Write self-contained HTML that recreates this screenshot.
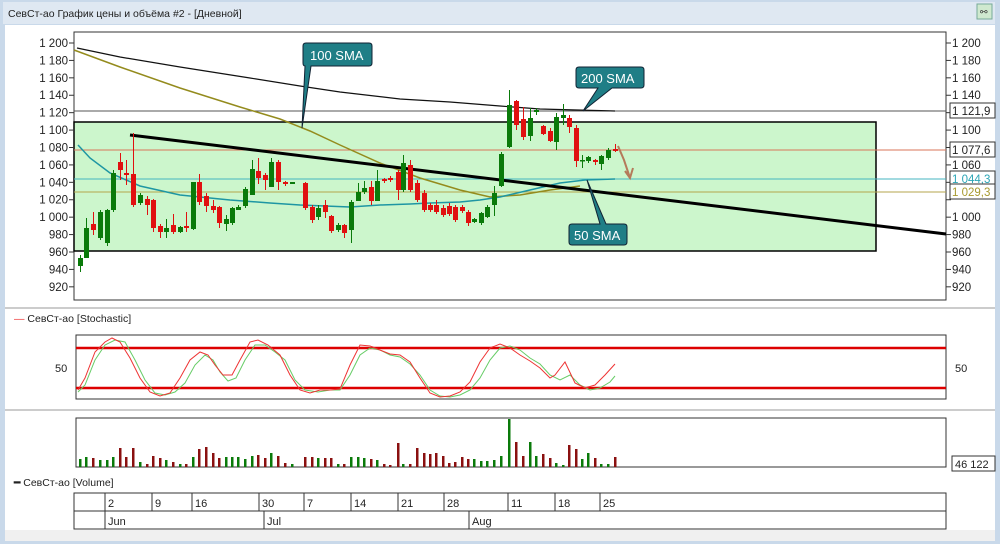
<!DOCTYPE html>
<html><head><meta charset="utf-8"><style>
body{margin:0;width:1000px;height:544px;overflow:hidden;background:#fff;font-family:"Liberation Sans",sans-serif}
svg text{font-family:"Liberation Sans",sans-serif}
</style></head><body>
<svg id="s" width="1000" height="544" viewBox="0 0 1000 544" xmlns="http://www.w3.org/2000/svg">
<rect x="0" y="0" width="1000" height="544" fill="#c9d9ea"/>
<rect x="3" y="2" width="992" height="22" fill="#dfe8f2"/>
<text x="8" y="17" font-size="10.5" fill="#222">СевСт-ао График цены и объёма #2 - [Дневной]</text>
<rect x="977" y="4" width="15" height="15" fill="#cfe9cf" stroke="#7a9" stroke-width="1"/>
<text x="980" y="15" font-size="9" fill="#333">⚯</text>
<rect x="5" y="25" width="990" height="516" fill="#fff"/>
<rect x="5" y="530" width="990" height="11" fill="#f0f0f0"/>
<line x1="5" y1="308" x2="995" y2="308" stroke="#ccc" stroke-width="2"/>
<line x1="5" y1="410" x2="995" y2="410" stroke="#ccc" stroke-width="2"/>
<rect x="74" y="32" width="872" height="268" fill="#fff" stroke="#333" stroke-width="1"/>
<rect x="74" y="122" width="802" height="129" fill="#ccf6cc" stroke="#000" stroke-width="1.5"/>
<line x1="74" y1="111" x2="946" y2="111" stroke="#555" stroke-width="1"/>
<line x1="74" y1="150" x2="946" y2="150" stroke="#d9755a" stroke-width="1"/>
<line x1="74" y1="179" x2="946" y2="179" stroke="#45b6c0" stroke-width="1"/>
<line x1="74" y1="192" x2="946" y2="192" stroke="#b5a64c" stroke-width="1"/>
<polyline fill="none" stroke="#111" stroke-width="1.2" points="77,48 120,57 180,67 250,78 300,86 340,92 400,99 450,102 500,106 540,109 615,111"/>
<polyline fill="none" stroke="#948b1d" stroke-width="1.5" points="74,50 120,67 180,88 240,107 280,119 310,131 340,145 380,163 420,178 460,190 490,197 520,195 550,190 580,186"/>
<polyline fill="none" stroke="#1e96a3" stroke-width="1.5" points="78,145 90,158 110,173 140,186 180,195 230,200 270,203 300,205 350,207 380,205 410,204 430,203 460,202 480,200 500,197 530,190 560,183 585,180 615,179"/>
<line x1="130" y1="135" x2="946" y2="234" stroke="#000" stroke-width="3"/>
<g id="candles"></g>
<polyline fill="none" stroke="#b57a5a" stroke-width="2" points="618,146 624,160 630,178 625,171 630,178 633,168"/>
<path d="M306,43 H369 Q372,43 372,46 V63 Q372,66 369,66 H311 L302,128 L305,66 Q303,66 303,63 V46 Q303,43 306,43Z" fill="#1f7e86" stroke="#123" stroke-width="1"/>
<text x="310" y="60" font-size="13" fill="#fff">100 SMA</text>
<path d="M579,67 H641 Q644,67 644,70 V85 Q644,88 641,88 H612 L583,111 L598,88 H579 Q576,88 576,85 V70 Q576,67 579,67Z" fill="#1f7e86" stroke="#123" stroke-width="1"/>
<text x="581" y="83" font-size="13" fill="#fff">200 SMA</text>
<path d="M572,224 H600 L587,180 L606,224 H624 Q627,224 627,227 V242 Q627,245 624,245 H572 Q569,245 569,242 V227 Q569,224 572,224Z" fill="#1f7e86" stroke="#123" stroke-width="1"/>
<text x="574" y="240" font-size="13" fill="#fff">50 SMA</text>
<g id="axes" font-size="11.5" fill="#222"></g>
<text x="14" y="322" font-size="10.5" fill="#222"><tspan fill="#e33">—</tspan> СевСт-ао [Stochastic]</text>
<rect x="76" y="335" width="870" height="64" fill="#fff" stroke="#333"/>
<rect x="76" y="346" width="870" height="4" fill="#d00" opacity=".25"/>
<line x1="76" y1="348" x2="946" y2="348" stroke="#d00" stroke-width="2"/>
<rect x="76" y="386" width="870" height="4" fill="#d00" opacity=".25"/>
<line x1="76" y1="388" x2="946" y2="388" stroke="#d00" stroke-width="2"/>
<text x="55" y="372" font-size="11" fill="#222">50</text>
<text x="955" y="372" font-size="11" fill="#222">50</text>
<polyline fill="none" stroke="#6c6" stroke-width="1" points="78,392 85,385 95,360 105,345 115,340 125,342 135,360 145,380 155,393 165,395 175,392 185,383 195,365 205,355 213,360 220,372 228,381 236,378 245,360 255,345 265,345 275,352 285,360 295,380 305,390 318,392 330,390 340,390 350,375 360,355 370,348 380,350 390,355 400,357 410,364 420,375 430,390 440,396 450,397 460,395 470,390 480,378 490,360 500,348 510,346 520,350 530,358 540,364 550,375 560,380 570,375 580,385 590,390 600,388 610,382 615,376"/>
<polyline fill="none" stroke="#e33" stroke-width="1" points="78,390 85,378 95,352 105,342 112,338 120,342 130,358 140,378 150,392 160,396 170,393 180,378 190,360 200,352 208,355 215,365 223,375 232,375 240,360 250,342 258,340 268,345 280,355 290,375 300,390 310,393 320,390 330,390 340,389 350,365 360,345 370,346 380,350 390,354 400,355 410,362 420,378 430,393 440,397 450,396 460,392 470,382 480,362 490,348 500,344 510,348 520,355 530,361 540,368 550,378 555,375 565,362 575,383 585,388 595,385 605,375 615,364"/>
<rect x="76" y="418" width="870" height="49" fill="#fff" stroke="#333"/>
<g id="vol"></g>
<rect x="952" y="456" width="43" height="15" fill="#fff" stroke="#333"/>
<text x="955" y="468" font-size="11" fill="#222">46 122</text>
<text x="14" y="486" font-size="10.5" fill="#222"><tspan font-weight="bold">━</tspan> СевСт-ао [Volume]</text>
<rect x="74" y="493" width="872" height="36" fill="#fff" stroke="#333"/>
<line x1="74" y1="511" x2="946" y2="511" stroke="#333"/>
<g id="dates" font-size="11" fill="#222"></g>
</svg>
<script>
var NS="http://www.w3.org/2000/svg";
function el(p,t,a,txt){var e=document.createElementNS(NS,t);for(var k in a)e.setAttribute(k,a[k]);if(txt!=null)e.textContent=txt;document.getElementById(p).appendChild(e);}
var C=[[78,255,258,266,272,'g'],[84,218,228,258,258,'g'],[91,212,224,230,235,'r'],[98,210,212,238,240,'g'],[105,209,210,243,246,'g'],[111,170,173,210,212,'g'],[118,153,162,170,180,'r'],[124,160,173,175,185,'r'],[131,133,174,205,207,'r'],[138,193,195,203,205,'g'],[145,196,199,205,215,'r'],[151,199,200,228,232,'r'],[158,224,226,232,238,'r'],[164,219,228,232,238,'g'],[171,214,225,232,234,'r'],[178,226,227,232,233,'g'],[184,212,226,228,232,'r'],[191,182,182,229,230,'g'],[197,174,182,202,205,'r'],[204,193,196,206,212,'r'],[211,200,206,210,213,'r'],[217,206,207,223,228,'r'],[224,215,219,224,231,'g'],[230,207,208,223,225,'g'],[236,205,207,210,210,'g'],[243,187,189,206,208,'g'],[250,160,169,195,195,'g'],[256,158,171,178,184,'r'],[263,173,175,180,190,'r'],[269,158,162,187,187,'g'],[276,160,162,182,190,'r'],[283,181,182,184,186,'r'],[290,182,182,184,184,'g'],[303,182,183,208,210,'r'],[310,205,207,220,223,'r'],[316,205,208,217,220,'g'],[323,200,205,212,218,'r'],[329,215,216,231,233,'r'],[336,223,225,230,232,'g'],[342,224,225,233,238,'r'],[349,200,202,230,243,'g'],[356,183,192,201,201,'g'],[362,181,188,192,194,'g'],[369,181,187,201,205,'r'],[375,170,181,201,201,'g'],[382,178,179,181,183,'r'],[388,176,178,180,182,'r'],[396,170,172,190,200,'r'],[401,155,163,190,192,'g'],[408,160,165,190,192,'r'],[415,180,183,200,202,'r'],[422,190,193,210,212,'r'],[428,203,205,210,212,'r'],[434,200,205,212,214,'r'],[441,205,208,215,217,'r'],[447,203,206,214,216,'r'],[453,205,207,220,222,'r'],[460,205,207,211,213,'r'],[466,210,212,223,226,'r'],[472,218,219,222,223,'g'],[479,212,213,223,225,'g'],[485,205,207,217,218,'g'],[492,186,193,205,216,'g'],[499,152,154,186,187,'g'],[507,90,105,147,148,'g'],[514,100,101,125,130,'r'],[521,107,119,137,140,'r'],[528,108,118,136,141,'g'],[534,108,110,112,115,'g'],[541,125,126,134,135,'r'],[548,128,131,141,142,'r'],[554,113,117,142,150,'g'],[561,104,115,118,125,'g'],[567,115,118,127,133,'r'],[574,125,128,161,167,'r'],[580,155,160,160,168,'g'],[586,156,157,161,163,'g'],[593,159,160,162,165,'r'],[599,155,156,164,170,'g'],[606,148,150,158,160,'g'],[613,144,149,151,152,'r']];
var VH=[8,10,9,7,7,10,19,10,19,5,3,11,9,7,5,3,3,10,18,20,14,9,10,10,10,8,11,12,9,14,11,4,3,10,10,9,9,9,3,3,10,10,9,8,7,3,2,24,3,3,19,14,13,14,11,4,5,10,8,8,6,6,7,11,12,14,48,25,11,13,9,4,2,22,18,8,14,9,3,3,10,7,2];
C.forEach(function(c,i){var col=c[5]=='g'?'#0a7a0a':'#e01010';
el('candles','line',{x1:c[0]+2.5,y1:c[1],x2:c[0]+2.5,y2:c[4],stroke:col,'stroke-width':1});
el('candles','rect',{x:c[0],y:c[2],width:5,height:Math.max(1.5,c[3]-c[2]),fill:col});
var vh=c[0]==507?48:c[0]==514?25:c[0]==521?11:(VH[i]||4);
el('vol','rect',{x:c[0]+1,y:467-vh,width:2.5,height:vh,fill:c[5]=='g'?'#0a7a0a':'#8a1010'});
});
for(var p=920;p<=1200;p+=20){var y=43+(1200-p)*0.8708;var s=p>=1000?('1 '+String(p).slice(1)):String(p);
el('axes','line',{x1:69,y1:y,x2:74,y2:y,stroke:'#333'});el('axes','line',{x1:946,y1:y,x2:951,y2:y,stroke:'#333'});
el('axes','text',{x:68,y:y+4,'text-anchor':'end'},s);
if([1120,1080,1040,1020].indexOf(p)<0)el('axes','text',{x:952,y:y+4},s);}
[[111,'1 121,9','#222'],[150,'1 077,6','#222'],[179,'1 044,3','#2aa5b5'],[192,'1 029,3','#a89a30']].forEach(function(b){
el('axes','rect',{x:950,y:b[0]-8,width:45,height:15,fill:'#fff',stroke:'#333'});el('axes','text',{x:952,y:b[0]+4,fill:b[2]},b[1]);});
[[105,'2'],[152,'9'],[192,'16'],[259,'30'],[304,'7'],[351,'14'],[398,'21'],[444,'28'],[508,'11'],[555,'18'],[600,'25']].forEach(function(d){
el('dates','line',{x1:d[0],y1:493,x2:d[0],y2:511,stroke:'#333'});el('dates','text',{x:d[0]+3,y:507},d[1]);});
[[105,'Jun'],[264,'Jul'],[469,'Aug']].forEach(function(d){el('dates','line',{x1:d[0],y1:511,x2:d[0],y2:529,stroke:'#333'});el('dates','text',{x:d[0]+3,y:525},d[1]);});
</script>
</body></html>
